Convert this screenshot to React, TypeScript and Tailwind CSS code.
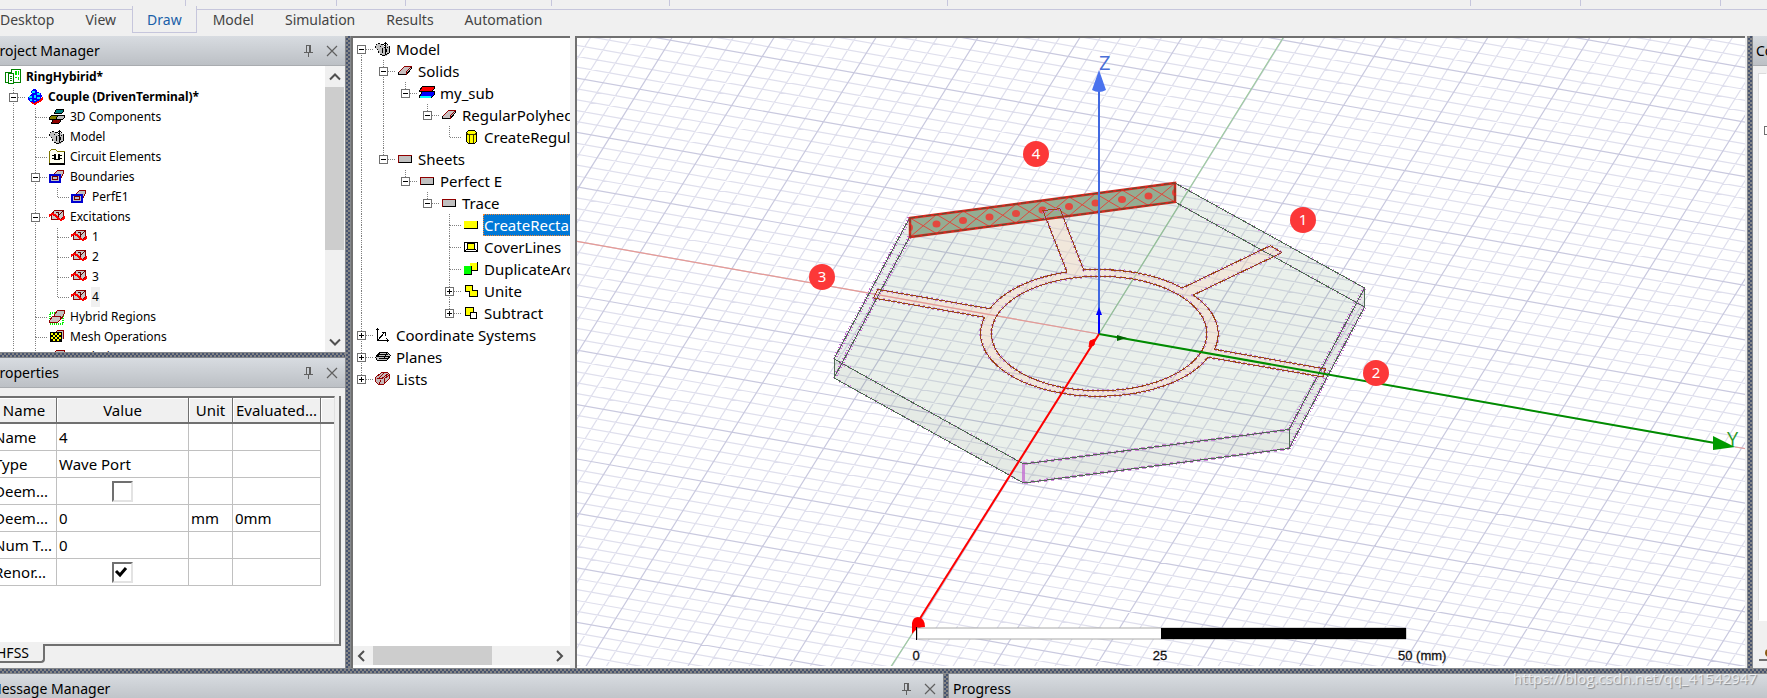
import { Fragment, useState, type ReactNode } from 'react'
import { clsx } from 'clsx'

type TreeNode = {
  label: string
  icon: ReactNode
  children?: TreeNode[]
  collapsed?: boolean
  bold?: boolean
  state?: 'selected' | 'inactive'
}

type PropRow = { name: string; value?: string; check?: boolean; unit?: string; evaluated?: string }

/* ---------- icons ---------- */

function Svg({ children }: { children: ReactNode }) {
  return (
    <svg viewBox="0 0 16 16" className="block h-4 w-4 shrink-0" shapeRendering="crispEdges" aria-hidden="true">
      {children}
    </svg>
  )
}

const projectIcon = (
  <Svg>
    <path d="M6.500 .5h9v13h-9z" fill="#fff" stroke="#008000" />
    <path d="M10 2h2v4h-2zM13 2h1v4h-1zM10 8h2v1h-2zM13 8h1v3h-1z" fill="#00e000" />
    <path d="M.5 3.500h6v10h-6z" fill="#fff" stroke="#008000" />
    <path d="M3.500 4.500h5v10h-5z" fill="#fff" stroke="#008000" />
    <path d="M5 7h2M5 9h2M5 11h2" stroke="#008000" />
  </Svg>
)

const designIcon = (
  <Svg>
    <path d="M3 13l5 3 8-5v-3l-5 4z" fill="#f00" />
    <path d="M4 2l3-2 3 1v2l4 1 1 3-2 4-4 2-2 1-3-1-3-2 0-3 2-2 2-1z" fill="#00f" />
    <path d="M5 2h3v2h-3zM10 4h3v2h-3zM2 7h3v2h-3zM7 6h2v3h-2zM10 8h3v2h-3zM3 10h2v2h-2zM7 11h2v1h-2z" fill="#00e8ff" />
  </Svg>
)

const componentsIcon = (
  <Svg>
    <path d="M5.500 3.500l2-3h7v2l-2 2h-7z" fill="#008080" stroke="#000" />
    <path d="M.5 8.500l2-2h6l-1 4h-7z" fill="#808000" stroke="#000" />
    <path d="M7.500 8.500l2-2h6v2l-2 2h-6z" fill="#c0c0c0" stroke="#000" />
    <path d="M2.500 13.500l2-3h7v2l-2 2h-7z" fill="#900000" stroke="#000" />
  </Svg>
)

const modelIcon = (
  <Svg>
    <path d="M1 4l3-2 3 2 2 2 3-2 3 2v6l-4 3h-4l-3-4-3-4z" fill="#c0c0c0" />
    <path d="M1 3h1v1h-1zM3 2h2v1h-2zM0 5h1v2h-1zM2 8h1v1h-1zM3 10h1v2h-1zM5 5h1v1h-1zM7 7h1v5h-1zM5 13h2v1h-2zM7 14h3v1h-3zM10 13h2v1h-2zM12 12h2v1h-2zM14 5h1v7h-1zM9 6h1v1h-1zM12 6h1v1h-1zM11 8h1v3h-1zM6 3h2v1h-2zM9 4h1v1h-1z" fill="#000" />
    <path d="M10 1h1v13h-1zM9 2h3v1h-3zM8 3h1v1h-1zM12 3h1v1h-1z" fill="#000" />
  </Svg>
)

const circuitIcon = (
  <Svg>
    <path d="M.5 14.500v-12l2-2h4l2 2h7v12z" fill="#fffff0" stroke="#807800" />
    <path d="M0 14h16v2h-16zM15 3h1v12h-1z" fill="#000" />
    <path d="M3 6h3v1h-3zM3 9h3v1h-3zM10 6h3v1h-3zM10 9h3v1h-3zM5 5h2v6h-2zM9 5h2v6h-2zM6 10h4v1h-4z" fill="#000" />
  </Svg>
)

const boundaryIcon = (
  <Svg>
    <path d="M5.500 4.500l3-3h6v3l-3 5h-6z" fill="#c0c0c0" stroke="#900000" />
    <path d="M1 6h10v7h-10z" fill="#c0c0c0" stroke="#0000d0" strokeWidth="2" />
    <path d="M3.500 7.500h5v3h-5z" fill="#c0c0c0" stroke="#700000" />
  </Svg>
)

const excitationIcon = (
  <Svg>
    <path d="M2.500 10.500v-5l3-4h9v6l-3 3z" fill="#c8c8c8" stroke="#900000" />
    <path d="M9.500 6.500l5-5M6.500 3.500h3v4" fill="none" stroke="#600000" />
    <path d="M0 8l1-2 2-1 3 1 4 4 2 1 2-1 2-3" fill="none" stroke="#f00" strokeWidth="2.200" />
  </Svg>
)

const hybridIcon = (
  <Svg>
    <path d="M1 4h13v11h-13z" fill="none" stroke="#00f000" strokeWidth="2" strokeDasharray="1 1" />
    <path d="M5.500 5.500l3-4h7v3l-3 5h-7z" fill="#c0c0c0" stroke="#900000" />
    <path d="M.5 11.500l3-4h8v3l-3 3h-8z" fill="#d0c0c0" stroke="#900000" />
  </Svg>
)

const meshIcon = (
  <Svg>
    <path d="M6 4l3-3h5v9" fill="#c0c0c0" stroke="#900000" />
    <path d="M1 3h12v10h-12z" fill="#000" />
    <path d="M2 4h2v2h-2zM6 4h2v2h-2zM10 4h2v2h-2zM4 6h2v2h-2zM8 6h2v2h-2zM2 8h2v2h-2zM6 8h2v2h-2zM10 8h2v2h-2zM4 10h2v2h-2zM8 10h2v2h-2z" fill="#ff0" />
  </Svg>
)

const analysisIcon = (
  <Svg>
    <path d="M4.500 5.500l3-4h8v4l-3 4h-8z" fill="#c0c0c0" stroke="#900000" />
  </Svg>
)

const solidIcon = (
  <Svg>
    <path d="M1.500 9.500l6-6h7v2l-5 6h-8z" fill="#c8c0c0" stroke="#000" />
    <path d="M1.500 9.500l6-6h7M14.500 3.500l-5 5v3" fill="none" stroke="#900000" />
  </Svg>
)

const materialIcon = (
  <Svg>
    <path d="M.5 5.500l3-4h12v2l-3 3h-12z" fill="#f00" stroke="#000" />
    <path d="M.5 11.500l3-5h12v3l-3 3h-12z" fill="#00f" stroke="#000" />
    <path d="M1 11h11v2h-11z" fill="#0ff" />
  </Svg>
)

const cylinderIcon = (
  <Svg>
    <path d="M3.500 3.500l2-2h6l2 2v9l-2 2h-6l-2-2z" fill="#ff0" stroke="#000" />
    <path d="M3.500 4.500l2 1h6l2-1M6.500 6v8M10.500 6v8" fill="none" stroke="#403800" />
  </Svg>
)

const sheetIcon = (
  <Svg>
    <path d="M1.500 4.500h13v7h-13z" fill="#c0c0c0" stroke="#000" />
    <path d="M1.500 12v-7.500h13" fill="none" stroke="#900000" />
  </Svg>
)

const rectIcon = (
  <Svg>
    <path d="M1 4h13v8h-13z" fill="#ff0" />
    <path d="M1 11.500h13.500v-7.500" fill="none" stroke="#000" />
  </Svg>
)

const coverIcon = (
  <Svg>
    <path d="M1.500 3.500h13v9h-13z" fill="#fff" stroke="#000" />
    <path d="M4.500 4.500h7v6h-7z" fill="#ff0" stroke="#000" />
    <path d="M1 13l3-3M15 13l-3-3" stroke="#000" />
  </Svg>
)

const duplicateIcon = (
  <Svg>
    <path d="M6.500 1.500h8v8h-8z" fill="#ff0" />
    <path d="M14.500 1v8.500h-6" fill="none" stroke="#000" />
    <path d="M1 5h8v9h-8z" fill="#0f0" />
    <path d="M8.500 5v9M1 13.500h8" stroke="#000" />
  </Svg>
)

const uniteIcon = (
  <Svg>
    <path d="M2.500 2.500h7v5h5v6h-8v-5h-4z" fill="#ff0" stroke="#000" />
  </Svg>
)

const subtractIcon = (
  <Svg>
    <path d="M2.500 2.500h8v8h-8z" fill="#ff0" stroke="#000" />
    <path d="M7.500 7.500h6v6h-6z" fill="#fff" stroke="#000" />
  </Svg>
)

const coordIcon = (
  <Svg>
    <path d="M2.500 1v12.500h11M3 13l7-8M0.500 3.500l2-2 2 2M11.500 11.500l2 2-2 2M7 5.500h3v3" fill="none" stroke="#000" />
  </Svg>
)

const planesIcon = (
  <Svg>
    <path d="M.5 8.500l4-5h8l3 3-4 5h-9z" fill="#c0c0c0" stroke="#000" />
    <path d="M3 5h10M2 7h12M4 9h9M2 11h8M5 3l-2 4M12 4l-3 6" stroke="#000" />
  </Svg>
)

const listsIcon = (
  <Svg>
    <path d="M.5 10.500v-4l6-5h6l2 2v4l-6 6h-5z" fill="#c8b8b8" stroke="#900000" />
    <path d="M2 7l4 1 7-5M6 9l-2 4M9 2l-5 5M9 12v-4l5-4" fill="none" stroke="#900000" />
  </Svg>
)

/* ---------- tree data ---------- */

const PROJECT_TREE: TreeNode[] = [
  {
    label: 'Couple (DrivenTerminal)*', icon: designIcon, bold: true,
    children: [
      { label: '3D Components', icon: componentsIcon },
      { label: 'Model', icon: modelIcon },
      { label: 'Circuit Elements', icon: circuitIcon },
      { label: 'Boundaries', icon: boundaryIcon, children: [{ label: 'PerfE1', icon: boundaryIcon }] },
      {
        label: 'Excitations', icon: excitationIcon,
        children: [
          { label: '1', icon: excitationIcon },
          { label: '2', icon: excitationIcon },
          { label: '3', icon: excitationIcon },
          { label: '4', icon: excitationIcon, state: 'inactive' },
        ],
      },
      { label: 'Hybrid Regions', icon: hybridIcon },
      { label: 'Mesh Operations', icon: meshIcon },
      { label: 'Analysis', icon: analysisIcon },
    ],
  },
  { label: 'Definitions', icon: analysisIcon },
]

const MODEL_TREE: TreeNode[] = [
  {
    label: 'Model', icon: modelIcon,
    children: [
      {
        label: 'Solids', icon: solidIcon,
        children: [{
          label: 'my_sub', icon: materialIcon,
          children: [{
            label: 'RegularPolyhedron1', icon: solidIcon,
            children: [{ label: 'CreateRegularPolyhedron', icon: cylinderIcon }],
          }],
        }],
      },
      {
        label: 'Sheets', icon: sheetIcon,
        children: [{
          label: 'Perfect E', icon: sheetIcon,
          children: [{
            label: 'Trace', icon: sheetIcon,
            children: [
              { label: 'CreateRectangle', icon: rectIcon, state: 'selected' },
              { label: 'CoverLines', icon: coverIcon },
              { label: 'DuplicateAroundAxis', icon: duplicateIcon },
              { label: 'Unite', icon: uniteIcon, collapsed: true },
              { label: 'Subtract', icon: subtractIcon, collapsed: true },
            ],
          }],
        }],
      },
    ],
  },
  { label: 'Coordinate Systems', icon: coordIcon, collapsed: true },
  { label: 'Planes', icon: planesIcon, collapsed: true },
  { label: 'Lists', icon: listsIcon, collapsed: true },
]

/* ---------- shared pieces ---------- */

function Guide({ up, down, across, box }: { up?: boolean; down?: boolean; across?: boolean; box?: '+' | '-' }) {
  return (
    <svg viewBox="0 0 22 22" preserveAspectRatio="xMidYMid slice" className="h-full w-[22px] shrink-0" shapeRendering="crispEdges" aria-hidden="true">
      <g stroke="#808080" strokeDasharray="1 1">
        {up && <path d="M10.500 0v11" />}
        {down && <path d="M10.500 11v11" />}
        {across && <path d="M11 11.500h11" />}
      </g>
      {box && (
        <g fill="none">
          <path d="M6.500 7.500h8v8h-8z" fill="#fff" stroke="#707070" />
          <path d="M8 11.500h5" stroke="#000" />
          {box === '+' && <path d="M10.500 9v5" stroke="#000" />}
        </g>
      )}
    </svg>
  )
}

function TreeRows({ nodes, dense, trail = [], attached }: { nodes: TreeNode[]; dense?: boolean; trail?: boolean[]; attached?: boolean }) {
  return (
    <>
      {nodes.map((node, i) => {
        const last = i === nodes.length - 1
        const box = node.collapsed ? '+' : node.children ? '-' : undefined
        return (
          <Fragment key={node.label}>
            <li className={clsx('flex shrink-0 items-center', dense ? 'h-5' : 'h-[22px]')}>
              {trail.map((line, d) => <Guide key={d} up={line} down={line} />)}
              <Guide up={attached || i > 0} down={!last} across box={box} />
              <span className="w-[22px] shrink-0 pl-[2px]">{node.icon}</span>
              <span
                className={clsx(
                  'flex h-full items-center whitespace-nowrap',
                  node.bold && 'font-bold',
                  node.state === 'selected' ? 'border border-dotted border-[#ff8728] bg-[#0078d7] text-white' : 'px-px',
                  node.state === 'inactive' && 'bg-[#f0f0f0]',
                )}
              >
                {node.label}
              </span>
            </li>
            {node.children && !node.collapsed && (
              <TreeRows nodes={node.children} dense={dense} trail={[...trail, !last]} attached />
            )}
          </Fragment>
        )
      })}
    </>
  )
}

function SplitterX() {
  return (
    <div className="h-[6px] shrink-0 border-y border-[#85888c] bg-[repeating-conic-gradient(#46536f_0_25%,#858585_0_50%)] bg-[length:4px_4px]" />
  )
}

function SplitterY() {
  return (
    <div className="w-[6px] shrink-0 border-x border-[#85888c] bg-[repeating-conic-gradient(#46536f_0_25%,#858585_0_50%)] bg-[length:4px_4px]" />
  )
}

function PanelTitle({ title, tools, className }: { title: string; tools?: boolean; className?: string }) {
  return (
    <div className="flex h-[30px] w-full shrink-0 items-center overflow-hidden border-b border-[#a9acb0] bg-linear-to-b from-[#d8dce1] to-[#bcc0c5] text-[14px]">
      <h2 className={clsx('flex-1 whitespace-nowrap', className)}>{title}</h2>
      {tools && (
        <div className="flex items-center gap-3 pr-[7px] text-[#606060]">
          <button aria-label={`Pin ${title}`}>
            <svg viewBox="0 0 11 12" className="h-3 w-[11px]" fill="none" stroke="currentColor" shapeRendering="crispEdges">
              <path d="M3.500 7v-6.500h4v6.500M1 7.500h9M5.500 8v4M6.500 1v6" />
            </svg>
          </button>
          <button aria-label={`Close ${title}`}>
            <svg viewBox="0 0 12 12" className="h-3 w-3" fill="none" stroke="currentColor" strokeWidth="1.200">
              <path d="M1 1l10 10M11 1l-10 10" />
            </svg>
          </button>
        </div>
      )}
    </div>
  )
}

function Chevron({ d }: { d: string }) {
  return (
    <svg viewBox="0 0 12 12" className="h-3 w-3" fill="none" stroke="#505050" strokeWidth="2">
      <path d={d} />
    </svg>
  )
}

/* ---------- panels ---------- */

const TABS = ['Desktop', 'View', 'Draw', 'Model', 'Simulation', 'Results', 'Automation']

function Ribbon() {
  const [active, setActive] = useState('Draw')
  return (
    <header className="flex h-9 shrink-0 flex-col">
      <div className="flex h-[10px] border-b border-[#c6c6dc]">
        <span className="h-[6px] w-[186px] border-r border-[#c6c6dc]" />
        <span className="h-[6px] w-[151px] border-r border-[#c6c6dc]" />
        <span className="h-[6px] w-[69px] border-r border-[#c6c6dc]" />
        <span className="h-[6px] w-[146px] border-r border-[#c6c6dc]" />
        <span className="h-[6px] w-[118px] border-r border-[#c6c6dc]" />
        <span className="h-[6px] w-[278px] border-r border-[#c6c6dc]" />
        <span className="h-[6px] w-[523px] border-r border-[#c6c6dc]" />
        <span className="h-[6px] w-[110px] border-r border-[#c6c6dc]" />
        <span className="h-[6px] w-[140px] border-r border-[#c6c6dc]" />
      </div>
      <nav className="-mt-1 -ml-[15px] flex h-[27px] gap-px">
        {TABS.map((t) => (
          <button
            key={t}
            onClick={() => setActive(t)}
            className={clsx(
              'border-x border-b px-[14px] pt-px text-[14px] leading-5',
              t === active ? 'border-[#c6c6dc] bg-[#f0f0f0] text-[#1a5fa8]' : 'border-transparent text-[#444]',
            )}
          >
            {t}
          </button>
        ))}
      </nav>
    </header>
  )
}

function ProjectManager() {
  return (
    <section className="flex min-h-0 flex-1 flex-col">
      <PanelTitle title="Project Manager" tools className="-ml-[9px]" />
      <div className="flex min-h-0 flex-1 bg-white">
        <ul className="flex min-w-0 flex-1 flex-col overflow-hidden pt-px pl-[3px] text-[12px]">
          <li className="flex h-5 shrink-0 items-center">
            <span className="w-[22px] shrink-0 pl-[2px]">{projectIcon}</span>
            <span className="px-px font-bold">RingHybirid*</span>
          </li>
          <TreeRows nodes={PROJECT_TREE} dense attached />
        </ul>
        <div className="flex w-5 shrink-0 flex-col items-center bg-[#f0f0f0]">
          <button aria-label="Scroll up" className="grid h-[21px] shrink-0 place-items-center"><Chevron d="M1 8.500l5-5 5 5" /></button>
          <div className="flex w-full flex-1 flex-col pr-px"><div className="h-[67%] bg-[#cdcdcd]" /></div>
          <button aria-label="Scroll down" className="grid h-[21px] shrink-0 place-items-center"><Chevron d="M1 3.500l5 5 5-5" /></button>
        </div>
      </div>
    </section>
  )
}

const PROPS: PropRow[] = [
  { name: 'Name', value: '4' },
  { name: 'Type', value: 'Wave Port' },
  { name: 'Deem...', check: false },
  { name: 'Deem...', value: '0', unit: 'mm', evaluated: '0mm' },
  { name: 'Num T...', value: '0' },
  { name: 'Renor...', check: true },
]

function PropCheck({ label, initial }: { label: string; initial: boolean }) {
  const [on, setOn] = useState(initial)
  return (
    <label className="relative mx-auto block h-[21px] w-[21px]">
      <input
        type="checkbox"
        aria-label={label}
        checked={on}
        onChange={() => setOn(!on)}
        className="block h-full w-full appearance-none border-2 border-t-[#707070] border-r-[#e3e3e3] border-b-[#e3e3e3] border-l-[#707070] bg-white"
      />
      {on && (
        <svg viewBox="0 0 21 21" className="pointer-events-none absolute inset-0" fill="none" stroke="#000" strokeWidth="3">
          <path d="M4 9l4 4 6-7" />
        </svg>
      )}
    </label>
  )
}

function Properties() {
  const th = 'border-r border-b-2 border-r-[#707070] border-b-[#707070] bg-[#f0f0f0] font-normal shadow-[inset_1px_1px_0_#fff]'
  const td = 'border-r border-b border-[#c0c0c0] px-[2px]'
  return (
    <section className="flex h-[310px] shrink-0 flex-col">
      <PanelTitle title="Properties" tools className="-ml-[9px]" />
      <div className="mt-2 mr-1 h-[250px] overflow-hidden border-r-2 border-b-2 border-[#707070] pr-1 pb-[2px]">
        <div className="h-full overflow-hidden border-t-2 border-r border-t-[#707070] border-r-[#e0e0e0] bg-white">
          <table className="-ml-2 w-[344px] table-fixed border-separate border-spacing-0 text-[15px] leading-5">
            <thead>
              <tr className="h-[26px]">
                <th className={clsx(th, 'w-[65px]')}>Name</th>
                <th className={clsx(th, 'w-[132px]')}>Value</th>
                <th className={clsx(th, 'w-[44px]')}>Unit</th>
                <th className={clsx(th, 'w-[88px] whitespace-nowrap')}>Evaluated...</th>
                <th className={th} aria-label="More" />
              </tr>
            </thead>
            <tbody>
              {PROPS.map((r, i) => (
                <tr key={i} className="h-[27px]">
                  <td className={clsx(td, 'whitespace-nowrap')}>{r.name}</td>
                  <td className={td}>{r.check === undefined ? r.value : <PropCheck label={r.name} initial={r.check} />}</td>
                  <td className={td}>{r.unit}</td>
                  <td className={td}>{r.evaluated}</td>
                </tr>
              ))}
            </tbody>
          </table>
        </div>
      </div>
      <button className="-mt-[2px] h-[19px] w-[45px] overflow-hidden rounded-br-sm border-r-2 border-b-2 border-[#707070] bg-[#f0f0f0] text-left text-[14px] leading-4">
        <span className="-ml-1">HFSS</span>
      </button>
    </section>
  )
}

function ModelTree() {
  return (
    <section className="flex w-[219px] shrink-0 flex-col border-t-2 border-l-2 border-[#707070] bg-white">
      <ul className="-ml-[2px] flex min-h-0 flex-1 flex-col overflow-hidden text-[15px]">
        <TreeRows nodes={MODEL_TREE} />
      </ul>
      <div className="mb-[3px] flex h-[19px] shrink-0 items-stretch bg-[#f0f0f0]">
        <button aria-label="Scroll left" className="w-5 pl-[3px]"><Chevron d="M8 1l-5 5 5 5" /></button>
        <div className="flex-1"><div className="h-full w-[67%] bg-[#cdcdcd]" /></div>
        <button aria-label="Scroll right" className="w-5 pl-[3px]"><Chevron d="M4 1l5 5-5 5" /></button>
      </div>
    </section>
  )
}

/* ---------- 3D view ---------- */

const ORIGIN = [1099, 334]
const AXIS_X = [-30.55, 49]
const AXIS_Y = [91.8, 16.3]

// one family of parallel grid lines, five minor steps to a major one
function gridPath(step: number[], dir: number[], major: boolean) {
  let d = ''
  for (let i = -90; i <= 90; i++) {
    if ((i % 5 === 0) !== major) continue
    const x = ORIGIN[0] + (step[0] * i) / 5
    const y = ORIGIN[1] + (step[1] * i) / 5
    d += `M${x - dir[0] * 25} ${y - dir[1] * 25}L${x + dir[0] * 25} ${y + dir[1] * 25}`
  }
  return d
}

const MINOR = gridPath(AXIS_X, AXIS_Y, false) + gridPath(AXIS_Y, AXIS_X, false)
const MAJOR = gridPath(AXIS_X, AXIS_Y, true) + gridPath(AXIS_Y, AXIS_X, true)

const TRACE =
  'M1083.700 270A117.500 62.800 0 0 1 1182.300 288L1270.400 245.700L1281.800 252.700L1193.300 295A117.500 62.800 0 0 1 1214.500 349.300' +
  'L1325.500 369L1323 377L1208 357.300A117.500 62.800 0 0 1 1099 396.300A117.500 62.800 0 0 1 984.500 317.300L873.500 298L878 289.500L989.800 308.700' +
  'A117.500 62.800 0 0 1 1067 272L1043 210.600L1060 208.700Z'
const HOLE = 'M991.500 333.500a107.700 57.200 0 1 0 215.400 0a107.700 57.200 0 1 0 -215.400 0Z'

const BALLS = [
  { n: '1', x: 1303, y: 220 },
  { n: '2', x: 1376, y: 373 },
  { n: '3', x: 822, y: 277 },
  { n: '4', x: 1036, y: 154 },
]

const CELLS = Array.from({ length: 10 }, (_, i) => i)

function Viewport() {
  return (
    <main className="min-w-0 flex-1 border-t-2 border-l-2 border-[#707070] bg-white pb-[2px]">
      <svg viewBox="577 38 1168 628" preserveAspectRatio="xMidYMid slice" className="block h-full w-full" role="img" aria-label="3D model view">
        <path d={MINOR} stroke="#dfdfed" strokeWidth="1.200" />
        <path d={MAJOR} stroke="#c9c9df" strokeWidth="1.200" />
        <path d="M1099 334L1283 38M918 625L890 668" stroke="#9fcca0" strokeWidth="1.200" />

        {/* substrate */}
        <path d="M909.500 218L1175 183L1364.500 288V307L1289 448.500L1023.500 483L834 378V359Z" fill="#2f6b3b" fillOpacity=".1" />
        <path d="M834 359L1023.500 464L1289 429.500L1364.500 288V307L1289 448.500L1023.500 483L834 378Z" fill="#80706f" fillOpacity=".04" />
        <path d={TRACE + HOLE} fill="#fbdcc6" fillOpacity=".42" fillRule="evenodd" />
        <path d="M1099 334L577 241.400M1735 447L1745 448.500" stroke="#e89a94" strokeWidth="1.200" />

        <g fill="none" stroke="#c46fd2" shapeRendering="crispEdges">
          <path d="M909.500 218L834 359M909.500 237L834 378M1364.500 288L1289 429.500M1364.500 307L1289 448.500" strokeWidth="4" strokeDasharray="1 2" />
          <path d="M1023.500 464L1289 429.500M1023.500 483L1289 448.500" strokeWidth="3" strokeDasharray="4 3" strokeOpacity=".8" />
          <path d="M1023.500 464V483" strokeWidth="3" strokeOpacity=".8" />
          <path d="M1175 183L1364.500 288M1175 202L1364.500 307M834 359L1023.500 464M834 378L1023.500 483" strokeWidth="3" strokeDasharray="1 5" strokeOpacity=".7" />
        </g>
        <path
          d="M1175 183L1364.500 288V307L1175 202M909.500 218L834 359V378L909.500 237M834 359L1023.500 464L1289 429.500V448.500L1023.500 483L834 378M1364.500 288L1289 429.500M1364.500 307L1289 448.500"
          fill="none" stroke="#506a54" shapeRendering="crispEdges"
        />

        {/* selected wave port */}
        <path d="M910 218L1175 183V202L910 237Z" fill="#94ad92" />
        <g stroke="#e0483c" strokeWidth="1">
          {CELLS.map((i) => (
            <path key={i} d={`M${910 + 26.5 * i} ${218 - 3.5 * i}l26.500 15.500M${910 + 26.5 * i} ${237 - 3.5 * i}l26.500 -22.500`} />
          ))}
        </g>
        <g fill="#e4483f">
          {CELLS.slice(1).map((i) => <ellipse key={i} cx={910 + 26.5 * i} cy={227.5 - 3.5 * i} rx="4" ry="3.500" />)}
          <path d="M910 224a3 3.500 0 0 1 0 7zM1175 189a3 3.500 0 0 0 0 7z" />
        </g>
        <path d="M910 218L1175 183V202L910 237Z" fill="none" stroke="#d5281f" strokeWidth="2.500" />
        <path d="M910 218L1175 183V202L910 237Z" fill="none" stroke="#5a5030" strokeWidth="1" strokeDasharray="5 3" />

        <g fill="none" shapeRendering="crispEdges">
          <path d={TRACE + HOLE} stroke="#b877d4" strokeOpacity=".8" strokeWidth="3" strokeDasharray="2 3" />
          <path d={TRACE + HOLE} stroke="#9a4414" />
        </g>

        {/* axes */}
        <path d="M1099 334V86" stroke="#4169e1" strokeWidth="2" />
        <path d="M1099 70L1106 90Q1099 94 1092 90Z" fill="#4a72ee" />
        <path d="M1099 334V312" stroke="#00f" strokeWidth="2" />
        <path d="M1099 307l3 8h-6z" fill="#00f" />
        <path d="M1099 334L1715 443" stroke="#008c00" strokeWidth="2" />
        <path d="M1735 447L1713 450V436Z" fill="#009a00" />
        <path d="M1127 338l-10 3v-6z" fill="#006400" />
        <path d="M1099 334L919 620" stroke="#f00" strokeWidth="2" />
        <path d="M1095 339l-1 6-5 2 1-6z" fill="#f00" stroke="#f00" />
        <path d="M912 634V623Q913 617 918 617Q925 618 925 627Q917 627 912 634Z" fill="#f00" />
        <g className="font-['Open_Sans',sans-serif] text-[20px]">
          <text x="1099" y="70" fill="#4a6fd8">Z</text>
          <text x="1727" y="446" fill="#2c9a2c">Y</text>
        </g>

        {/* scale bar */}
        <path d="M917 628H1406V639H917Z" fill="#fff" stroke="#a8a8a8" />
        <path d="M916.500 627V640" stroke="#000" />
        <path d="M1161 628H1406V639H1161Z" fill="#000" />
        <g className="font-['Liberation_Sans',sans-serif] text-[13px]" fill="#111" stroke="#111" strokeWidth=".3">
          <text x="916" y="660" textAnchor="middle">0</text>
          <text x="1160" y="660" textAnchor="middle">25</text>
          <text x="1398" y="660">50 (mm)</text>
        </g>

        {BALLS.map((b) => (
          <g key={b.n}>
            <circle cx={b.x} cy={b.y} r="13" fill="#fc3838" />
            <text x={b.x} y={b.y + 5} textAnchor="middle" fill="#fff" className="text-[15px]">{b.n}</text>
          </g>
        ))}
      </svg>
    </main>
  )
}

function ComponentPanel() {
  return (
    <aside className="flex w-[14px] shrink-0 flex-col overflow-hidden">
      <PanelTitle title="Component" className="pl-[3px]" />
      <div className="mt-2 ml-[6px] flex-1 border-l-2 border-white bg-white pt-[52px] pl-[3px] shadow-[-1px_-1px_0_#dcdcdc]">
        <div className="h-[9px] w-[9px] border border-[#707070]" />
      </div>
      <div className="mb-[7px] ml-[6px] h-10 border-b-2 border-[#707070] pt-7 pl-[6px]">
        <div className="h-2 w-2 rounded-full bg-[#8a5a10]" />
      </div>
    </aside>
  )
}

export default function App() {
  return (
    <div className="relative flex h-screen w-full flex-col overflow-hidden bg-[#f0f0f0] font-['Noto_Sans',sans-serif] text-black">
      <Ribbon />
      <div className="flex min-h-0 flex-1">
        <div className="flex w-[345px] shrink-0 flex-col overflow-hidden">
          <ProjectManager />
          <SplitterX />
          <Properties />
        </div>
        <SplitterY />
        <ModelTree />
        <div className="w-[5px] shrink-0" />
        <Viewport />
        <div className="w-[2px] shrink-0" />
        <SplitterY />
        <ComponentPanel />
      </div>
      <SplitterX />
      <footer className="flex h-6 shrink-0 overflow-hidden">
        <div className="flex w-[943px] shrink-0">
          <PanelTitle title="Message Manager" tools className="-ml-[11px]" />
        </div>
        <SplitterY />
        <PanelTitle title="Progress" className="pl-1" />
      </footer>
      <a
        href="https://blog.csdn.net/qq_41542947"
        className="absolute right-[10px] bottom-2 font-['Open_Sans',sans-serif] text-[15px] leading-6 text-white/70 [text-shadow:1px_1px_1px_#0005]"
      >
        https://blog.csdn.net/qq_41542947
      </a>
    </div>
  )
}
